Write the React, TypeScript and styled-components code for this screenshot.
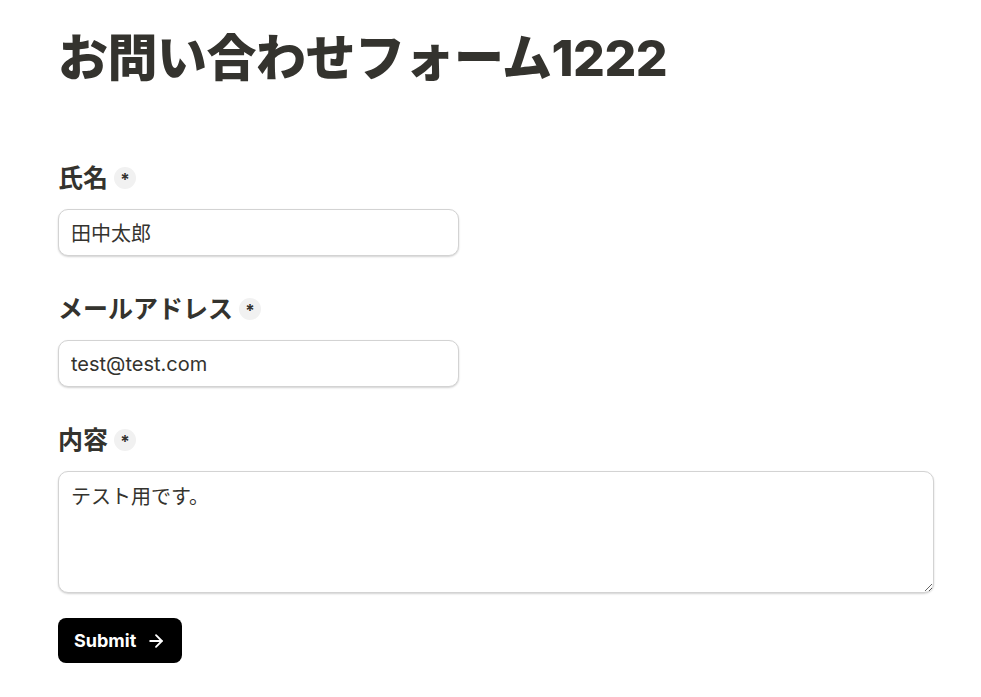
import React from 'react';
import styled, { createGlobalStyle } from 'styled-components';
import { ArrowRight } from 'lucide-react';

const GlobalStyle = createGlobalStyle`
  html, body {
    margin: 0;
    padding: 0;
    background: #fff;
  }
  body {
    font-family: Inter, 'Noto Sans CJK JP', sans-serif;
    color: #34332e;
  }
`;

const Page = styled.main`
  padding: 29px 47px 32px 58px;
  display: flex;
  flex-direction: column;
`;

const Title = styled.h1`
  margin: 0 0 75px;
  font-size: 50px;
  line-height: 58px;
  font-weight: 800;
  letter-spacing: -0.01em;
  color: #34332e;
`;

const Form = styled.form`
  display: flex;
  flex-direction: column;
  gap: 37px;
`;

const Field = styled.div`
  display: flex;
  flex-direction: column;
  gap: 15px;
`;

const LabelRow = styled.label`
  display: flex;
  align-items: center;
  gap: 6px;
  font-size: 25px;
  line-height: 32px;
  font-weight: 700;
  color: #34332e;
`;

const Required = styled.span`
  width: 22px;
  height: 22px;
  border-radius: 50%;
  background: #f1f1f1;
  display: inline-flex;
  align-items: center;
  justify-content: center;
  font-size: 17px;
  font-weight: 700;
  line-height: 1;
  padding-top: 5px;
  box-sizing: border-box;
`;

const inputBase = `
  box-sizing: border-box;
  border: 1px solid #d3d3d3;
  border-radius: 10px;
  box-shadow: 0 1px 2px rgba(0, 0, 0, 0.18);
  background: #fff;
  font-family: Inter, 'Noto Sans CJK JP', sans-serif;
  font-size: 20px;
  color: #34332e;
  outline: none;
`;

const TextInput = styled.input`
  ${inputBase}
  width: 401px;
  height: 47px;
  padding: 0 12px;
`;

const TextArea = styled.textarea`
  ${inputBase}
  width: 876px;
  height: 122px;
  padding: 11px 12px;
  line-height: 1.4;
  resize: vertical;
`;

const SubmitButton = styled.button`
  align-self: flex-start;
  margin-top: -12px;
  display: inline-flex;
  align-items: center;
  gap: 10px;
  height: 45px;
  padding: 0 16px;
  background: #000;
  color: #fff;
  border: none;
  border-radius: 8px;
  font-family: Inter, sans-serif;
  font-size: 18px;
  font-weight: 700;
  cursor: pointer;
`;

const App = () => (
  <>
    <GlobalStyle />
    <Page>
      <Title>お問い合わせフォーム1222</Title>
      <Form onSubmit={(e) => e.preventDefault()}>
        <Field>
          <LabelRow>
            氏名<Required>*</Required>
          </LabelRow>
          <TextInput defaultValue="田中太郎" />
        </Field>
        <Field>
          <LabelRow>
            メールアドレス<Required>*</Required>
          </LabelRow>
          <TextInput type="email" defaultValue="test@test.com" />
        </Field>
        <Field>
          <LabelRow>
            内容<Required>*</Required>
          </LabelRow>
          <TextArea defaultValue="テスト用です。" />
        </Field>
        <SubmitButton type="submit">
          Submit
          <ArrowRight size={20} strokeWidth={2.2} />
        </SubmitButton>
      </Form>
    </Page>
  </>
);

export default App;
